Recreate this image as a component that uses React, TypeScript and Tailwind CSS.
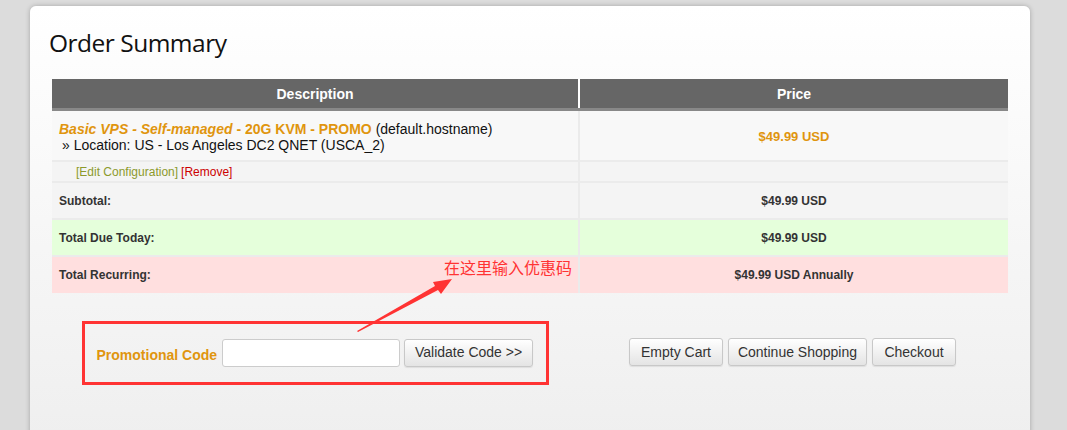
import React from 'react'

const arial = { fontFamily: '"Liberation Sans", Arial, sans-serif' }

function Btn({ children, w }: { children: React.ReactNode; w: string }) {
  return (
    <button
      className={`h-[28px] ${w} rounded-[3px] border border-[#c8c8c8] bg-gradient-to-b from-white to-[#e4e4e4] text-[14px] text-[#333] shadow-[0_1px_1px_rgba(0,0,0,0.08)]`}
    >
      {children}
    </button>
  )
}

export default function App() {
  return (
    <div className="w-[1067px] h-[430px] overflow-hidden bg-[#dcdcdc] pl-[30px] pt-[6px]" style={arial}>
      <div className="relative w-[1000px] h-[460px] rounded-[6px] bg-gradient-to-b from-white to-[#eeeeee] shadow-[0_0_5px_rgba(0,0,0,0.25)] px-[22px]">
        <h1
          className="pt-[20px] -ml-[3px] text-[24.5px] leading-[34px] text-[#111]"
          style={{ fontFamily: '"Open Sans", "Segoe UI", sans-serif', letterSpacing: '-0.5px' }}
        >
          Order Summary
        </h1>

        {/* Table */}
        <div className="mt-[19px] w-[956px] text-[#333]">
          <div className="grid grid-cols-[526px_428px] gap-x-[2px] bg-white border-b-[3px] border-[#888]">
            <div className="h-[29px] pt-[1px] bg-[#666] flex items-center justify-center text-white font-bold text-[14px]">Description</div>
            <div className="h-[29px] pt-[1px] bg-[#666] flex items-center justify-center text-white font-bold text-[14px]">Price</div>
          </div>

          <div className="grid grid-cols-[526px_428px] gap-x-[2px] gap-y-[2px] bg-[#ebebeb]">
            <div className="h-[49px] bg-[#f8f8f8] pl-[7px] pt-[10px] text-[14px] leading-[16px] text-[#111]">
              <div>
                <span className="italic font-bold text-[#e0950e]">Basic VPS - Self-managed</span>
                <span className="font-bold text-[#e0950e]"> - 20G KVM - PROMO</span> (default.hostname)
              </div>
              <div className="pl-[3px]">» Location: US - Los Angeles DC2 QNET (USCA_2)</div>
            </div>
            <div className="h-[49px] bg-[#f8f8f8] flex items-center justify-center font-bold text-[13px] text-[#e0950e] pt-[2px]">
              $49.99 USD
            </div>

            <div className="h-[19px] bg-[#f4f4f4] pl-[24px] flex items-center text-[12px]">
              <span className="text-[#8c9a2c]">[Edit Configuration]</span>
              <span className="ml-[3px] text-[#cc0000]">[Remove]</span>
            </div>
            <div className="h-[19px] bg-[#f4f4f4]" />

            <div className="h-[35px] bg-[#f4f4f4] pl-[7px] flex items-center font-bold text-[12px]">Subtotal:</div>
            <div className="h-[35px] bg-[#f4f4f4] flex items-center justify-center font-bold text-[12px]">$49.99 USD</div>

            <div className="h-[35px] bg-[#e5ffdb] pl-[7px] flex items-center font-bold text-[12px]">Total Due Today:</div>
            <div className="h-[35px] bg-[#e5ffdb] flex items-center justify-center font-bold text-[12px]">$49.99 USD</div>

            <div className="h-[36px] bg-[#ffdfdf] pl-[7px] flex items-center font-bold text-[12px]">Total Recurring:</div>
            <div className="h-[36px] bg-[#ffdfdf] flex items-center justify-center font-bold text-[12px]">$49.99 USD Annually</div>
          </div>

          {/* Bottom actions */}
          <div className="grid grid-cols-[526px_428px] gap-x-[2px] mt-[28px]">
            <div className="flex justify-center">
              <div className="w-[467px] h-[64px] border-[3px] border-[#ff3333] flex items-center pl-[12px] gap-[4px] pb-[1px]">
                <span className="font-bold text-[14px] text-[#e0950e] mt-[5px] mr-[1px]">Promotional Code</span>
                <input className="w-[178px] h-[28px] bg-white border border-[#ccc] rounded-[3px]" />
                <Btn w="w-[129px]">Validate Code &gt;&gt;</Btn>
              </div>
            </div>
            <div className="flex justify-center items-center gap-[5px] pb-[2px] pr-[3px]">
              <Btn w="w-[94px]">Empty Cart</Btn>
              <Btn w="w-[139px]">Continue Shopping</Btn>
              <Btn w="w-[84px]">Checkout</Btn>
            </div>
          </div>
        </div>

        {/* Annotation */}
        <div
          className="absolute left-[414px] top-[250px] text-[16px] leading-[22px] text-[#ff3333]"
          style={{ fontFamily: '"Noto Sans CJK SC", sans-serif' }}
        >
          在这里输入优惠码
        </div>
        <svg className="absolute left-0 top-0" width="1000" height="460" style={{ pointerEvents: 'none' }}>
          <polygon points="327,325 405,280 403,276 422,273 411,288 408,284 328,326" fill="#ff3333" />
        </svg>
      </div>
    </div>
  )
}
